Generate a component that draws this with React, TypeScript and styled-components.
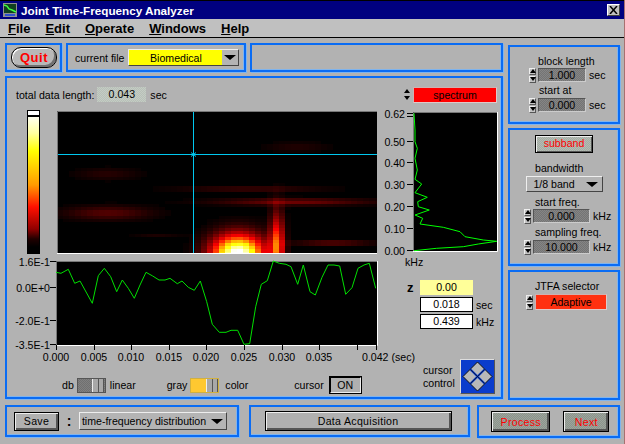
import React from 'react';
import styled, { createGlobalStyle, css } from 'styled-components';

const GlobalStyle = createGlobalStyle`
  html, body { margin: 0; padding: 0; background: #b2b2b2; }
  body { font-family: "Liberation Sans", Arial, sans-serif; font-size: 10.6px; color: #000; }
`;

const dither = (a: string, b: string) => css`
  background-color: ${a};
  background-image: repeating-conic-gradient(${a} 0 25%, ${b} 0 50%);
  background-size: 2px 2px;
`;

const Win = styled.div`
  width: 625px;
  height: 444px;
  overflow: hidden;
  background: #b2b2b2;
  box-sizing: border-box;
  border-right: 1px solid #a87070;
`;

const TitleBar = styled.div`
  height: 19px;
  box-sizing: border-box;
  border-top: 1px solid #000;
  background: #000080;
  color: #fff;
  display: flex;
  align-items: center;
  padding: 0 4px 0 3px;
  font-weight: bold;
  font-size: 11.7px;
  gap: 4px;
`;

const CloseBtn = styled.div`
  margin-left: auto;
  width: 13px;
  height: 12px;
  background: #c0c0c0;
  border: 1px solid;
  border-color: #fff #404040 #404040 #fff;
  box-sizing: border-box;
  display: flex;
  align-items: center;
  justify-content: center;
`;

const MenuBar = styled.div`
  height: 19px;
  box-sizing: border-box;
  background: #c0c0c0;
  border-bottom: 1px solid #000;
  display: flex;
  align-items: center;
  padding: 0 0 0 8px;
  font-weight: bold;
  font-size: 13px;
  gap: 15px;
  u { text-decoration: underline; }
`;

const Content = styled.div`
  padding: 5px 4px 0 5px;
`;

const UpperArea = styled.div`
  display: flex;
  gap: 5px;
`;

const LeftCol = styled.div`
  width: 498px;
  display: flex;
  flex-direction: column;
  gap: 4px;
`;

const RightCol = styled.div`
  width: 112px;
  padding-top: 2px;
  display: flex;
  flex-direction: column;
  gap: 4px;
`;

const Panel = styled.div<{ $w?: number; $h: number }>`
  ${(p) => (p.$w ? `width: ${p.$w}px;` : 'flex: 1;')}
  height: ${(p) => p.$h}px;
  box-sizing: border-box;
  border: 2px solid #0a6cf4;
  box-shadow: 1px 1px 0 #7fb4ee, inset -1px -1px 0 #7fb4ee;
`;

const TopStrip = styled.div`
  display: flex;
  gap: 4px;
`;

const CenterPanel = styled(Panel)<{ $pl: number }>`
  display: flex;
  align-items: center;
  padding-left: ${(p) => p.$pl}px;
`;

const QuitButton = styled.div`
  width: 46px;
  height: 21px;
  box-sizing: border-box;
  border: 1px solid #000;
  border-radius: 10px;
  box-shadow: inset 1px 1px 0 #fff, inset -2px -2px 0 #707070;
  background: #b8b8b8;
  color: #ff0000;
  font-weight: bold;
  font-size: 13px;
  letter-spacing: 0.5px;
  display: flex;
  align-items: center;
  justify-content: center;
`;

const Label = styled.span<{ $ml?: number }>`
  margin-left: ${(p) => p.$ml ?? 0}px;
  white-space: nowrap;
`;

const Ring = styled.div<{ $w: number; $h: number; $bg?: string; $ml?: number; $mt?: number }>`
  width: ${(p) => p.$w}px;
  height: ${(p) => p.$h}px;
  margin-left: ${(p) => p.$ml ?? 0}px;
  margin-top: ${(p) => p.$mt ?? 0}px;
  box-sizing: border-box;
  background: ${(p) => p.$bg ?? '#b4b4b4'};
  border: 1px solid;
  border-color: #eee #444 #444 #eee;
  display: flex;
  align-items: center;
  flex: none;
`;

const RingText = styled.div`
  flex: 1;
  text-align: center;
  white-space: nowrap;
`;

const ArrowBox = styled.div<{ $w: number }>`
  width: ${(p) => p.$w}px;
  align-self: stretch;
  background: #b4b4b4;
  display: flex;
  align-items: center;
  justify-content: center;
  flex: none;
`;

const DownArrow = styled.div<{ $s: number }>`
  width: 0;
  height: 0;
  border-left: ${(p) => p.$s}px solid transparent;
  border-right: ${(p) => p.$s}px solid transparent;
  border-top: ${(p) => p.$s - 1}px solid #000;
`;

const MainPanel = styled(Panel)`
  display: flex;
  flex-direction: column;
`;

const InfoRow = styled.div`
  display: flex;
  align-items: center;
  height: 19px;
  margin: 7px 4px 0 9px;
`;

const LengthValue = styled.div`
  width: 49px;
  height: 15px;
  margin: 0 4px 0 3px;
  ${dither('#b8c0b8', '#c4ccc4')}
  text-align: center;
  line-height: 15px;
`;

const RedValue = styled.div<{ $w: number; $ml: number; $bg: string }>`
  width: ${(p) => p.$w}px;
  height: 16px;
  margin-left: ${(p) => p.$ml}px;
  background: ${(p) => p.$bg};
  border: 1px solid;
  border-color: #d0b0b0 #e0c8c8 #e0c8c8 #d0b0b0;
  box-sizing: border-box;
  text-align: center;
  line-height: 15px;
`;

const TopSpinner = styled.div`
  display: flex;
  flex-direction: column;
  gap: 3px;
  align-items: center;
  width: 8px;
  margin-left: auto;
`;

const Body = styled.div`
  display: flex;
  margin-top: 4px;
`;

const PlotCol = styled.div`
  width: 372px;
  flex: none;
`;

const HeatRow = styled.div`
  display: flex;
  height: 147px;
  padding-left: 20px;
`;

const ColorBar = styled.div`
  width: 13px;
  height: 144px;
  margin: 2px 17px 0 0;
  box-sizing: border-box;
  border: 1px solid #000;
  flex: none;
  background: linear-gradient(
    to bottom,
    #fff 0,
    #fff 4px,
    #000 4px,
    #000 6px,
    #fffff0 6px,
    #ffffa0 22px,
    #ffff00 40px,
    #ff9a00 74px,
    #ff1000 96px,
    #900000 118px,
    #200000 128px,
    #000 136px
  );
`;

const Chart = styled.svg`
  display: block;
  overflow: visible;
  font-family: "Liberation Sans", Arial, sans-serif;
  font-size: 10.6px;
  flex: none;
`;

const HeatChart = styled(Chart)`
  overflow: hidden;
  margin-top: 3px;
`;

const SwitchRow = styled.div`
  display: flex;
  align-items: center;
  height: 18px;
  margin-top: 11px;
  padding-left: 55px;
`;

const SwitchTrack = styled.div<{ $on?: boolean }>`
  width: 29px;
  height: 15px;
  margin: 0 4px 0 3px;
  box-sizing: border-box;
  display: flex;
  justify-content: ${(p) => (p.$on ? 'flex-end' : 'flex-start')};
  border: 1px solid ${(p) => (p.$on ? '#d0b040' : '#555')};
  ${(p) => (p.$on ? 'background: #ffc830;' : dither('#707070', '#808080'))}
`;

const SwitchKnob = styled.div<{ $left: number }>`
  width: 12px;
  margin-left: ${(p) => p.$left}px;
  background: #a8a8a8;
  border-left: 1px solid #eee;
  border-right: 1px solid #555;
  box-sizing: border-box;
  &::after {
    content: '';
    display: block;
    width: 1px;
    height: 100%;
    margin-left: 5px;
    background: #555;
  }
`;

const OnButton = styled.div`
  width: 33px;
  height: 18px;
  margin-left: 5px;
  box-sizing: border-box;
  border: 2px solid;
  border-color: #000 #eee #eee #000;
  outline: 1px solid #000;
  outline-offset: -1px;
  background: #b0b0b0;
  text-align: center;
  line-height: 15px;
`;

const ReadCol = styled.div`
  width: 118px;
  flex: none;
  display: flex;
  flex-direction: column;
`;

const Readouts = styled.div`
  margin-top: 12px;
  padding-left: 28px;
  display: flex;
  flex-direction: column;
  gap: 2px;
`;

const ReadRow = styled.div`
  display: flex;
  align-items: center;
`;

const ZLabel = styled.b`
  width: 13px;
  font-size: 13px;
  flex: none;
`;

const ReadBox = styled.div<{ $pale?: boolean }>`
  width: 53px;
  height: 15px;
  box-sizing: border-box;
  background: ${(p) => (p.$pale ? '#ffff99' : '#fff')};
  border: 1px solid ${(p) => (p.$pale ? '#ffff99' : '#000')};
  text-align: center;
  line-height: 13px;
  margin-right: 3px;
`;

const CursorBlock = styled.div`
  display: flex;
  align-items: center;
  margin-top: 30px;
  padding-left: 44px;
  line-height: 13px;
  gap: 5px;
`;

const CursorPad = styled.div`
  width: 35px;
  height: 35px;
  box-sizing: border-box;
  background: #0a3ccc;
  border: 1px solid;
  border-color: #ddd #555 #555 #ddd;
  flex: none;
`;

const CenterStack = styled(Panel)`
  display: flex;
  flex-direction: column;
  align-items: center;
`;

const ControlLine = styled.div<{ $mt?: number; $pl?: number }>`
  display: flex;
  align-items: center;
  margin-top: ${(p) => p.$mt ?? 0}px;
  padding-left: ${(p) => p.$pl ?? 0}px;
  align-self: stretch;
  height: 14px;
  white-space: nowrap;
`;

const SpinnerWrap = styled.div`
  width: 7px;
  margin-right: 2px;
  display: flex;
  flex-direction: column;
  gap: 1px;
  flex: none;
`;

const SpinCell = styled.div`
  height: 7px;
  background: #c4c4c4;
  border: 1px solid;
  border-color: #eee #555 #555 #eee;
  box-sizing: border-box;
  display: flex;
  align-items: center;
  justify-content: center;
`;

const Tri = styled.div<{ $up?: boolean }>`
  width: 0;
  height: 0;
  border-left: 3px solid transparent;
  border-right: 3px solid transparent;
  ${(p) => (p.$up ? 'border-bottom: 4px solid #000;' : 'border-top: 4px solid #000;')}
`;

const Dark = styled.div<{ $w: number }>`
  width: ${(p) => p.$w}px;
  height: 14px;
  box-sizing: border-box;
  ${dither('#747474', '#858585')}
  border: 1px solid;
  border-color: #555 #ccc #ccc #555;
  text-align: center;
  line-height: 13px;
  margin-right: 3px;
  flex: none;
`;

const SubbandButton = styled.div`
  width: 58px;
  height: 18px;
  margin-top: 5px;
  box-sizing: border-box;
  border: 1px solid #000;
  box-shadow: inset 1px 1px 0 #eee, inset -1px -1px 0 #555;
  ${dither('#a4aca4', '#b4bcb4')}
  color: #ff0000;
  text-align: center;
  line-height: 15px;
`;

const FlatButton = styled.div<{ $w: number; $h: number; $red?: boolean; $ml?: number }>`
  width: ${(p) => p.$w}px;
  height: ${(p) => p.$h}px;
  margin-left: ${(p) => p.$ml ?? 0}px;
  box-sizing: border-box;
  border: 1px solid #000;
  box-shadow: inset 1px 1px 0 #eee, inset -2px -2px 0 #555;
  background: #b0b0b0;
  ${(p) => (p.$red ? dither('#8c948c', '#9ca49c') : '')}
  color: ${(p) => (p.$red ? '#ff0000' : '#000')};
  display: flex;
  align-items: center;
  justify-content: center;
  white-space: nowrap;
  letter-spacing: 0.3px;
  flex: none;
`;

const BottomArea = styled.div`
  display: flex;
  margin-top: 5px;
`;

const BottomPanel = styled(Panel)<{ $ml?: number }>`
  margin-left: ${(p) => p.$ml ?? 0}px;
  display: flex;
  align-items: center;
`;

const Colon = styled.b`
  width: 20px;
  text-align: center;
  font-size: 14px;
  flex: none;
`;

const clamp = (v: number) => Math.max(0, Math.min(1, v));

const heatColor = (v: number) => {
  const t = clamp(v);
  const r = Math.round(255 * clamp(t / 0.4));
  const g = Math.round(255 * clamp((t - 0.4) / 0.35));
  const b = Math.round(255 * clamp((t - 0.78) / 0.22));
  return `rgb(${r},${g},${b})`;
};

// blobs in reference px: cx, cy, rx, ry, level
const blobs = [
  [238, 254, 30, 22, 1.05],
  [277, 245, 8, 36, 0.5],
  [294, 202, 90, 4, 0.17],
  [250, 189, 85, 3.5, 0.09],
  [108, 213, 50, 8, 0.13],
  [107, 174, 38, 7, 0.06],
  [297, 147, 38, 6, 0.05],
  [333, 243, 45, 3, 0.15],
  [157, 236, 28, 1.5, 0.05],
];

const HeatCells = () => {
  const cells: React.ReactElement[] = [];
  for (let y = 111; y < 253; y += 3) {
    for (let x = 57; x < 377; x += 6) {
      let v = 0;
      blobs.forEach(([cx, cy, rx, ry, lvl]) => {
        const d = ((x + 3 - cx) / rx) ** 2 + ((y + 1.5 - cy) / ry) ** 2;
        v += lvl * Math.exp(-d * 1.4);
      });
      if (v > 0.012) {
        cells.push(<rect key={`${x}-${y}`} x={x} y={y} width={6} height={3} fill={heatColor(v)} />);
      }
    }
  }
  return <>{cells}</>;
};

const timeRaw = [
  [168, 52], [183, 55], [205, 43], [224, 85], [240, 78], [277, 145], [295, 62], [313, 40], [332, 65], [350, 110],
  [367, 75], [385, 100], [403, 130], [420, 90], [438, 52], [458, 63], [477, 75], [495, 75], [510, 70], [532, 86],
  [546, 78], [565, 97], [583, 106], [601, 78], [620, 140], [637, 208], [658, 232], [678, 232], [693, 226], [713, 226],
  [732, 268], [749, 266], [767, 155], [784, 88], [802, 77], [820, 18], [838, 25], [858, 28], [873, 35], [893, 88],
  [910, 30], [930, 110], [946, 120], [966, 67], [984, 30], [1002, 30], [1019, 33], [1037, 118], [1056, 98], [1074, 40],
  [1092, 30], [1108, 25], [1127, 100],
];
const timeLine = timeRaw.map(([x, y]) => `${(x / 3).toFixed(1)},${(y / 3 + 255).toFixed(1)}`).join(' ');

const specRaw = [
  [132, 40], [135, 90], [135, 125], [142, 145], [135, 175], [142, 210], [135, 238], [155, 252], [135, 278], [172, 292],
  [143, 305], [145, 320], [178, 330], [135, 345], [158, 355], [150, 372], [220, 382], [270, 395], [285, 410], [340, 420],
  [380, 424], [325, 432], [280, 440], [200, 445], [132, 452],
];
const specLine = specRaw.map(([x, y]) => `${(x / 3 + 370).toFixed(1)},${(y / 3 + 100).toFixed(1)}`).join(' ');

const freqTicks: [string, number][] = [
  ['0.62', 113], ['0.50', 141], ['0.40', 162], ['0.30', 184], ['0.20', 206], ['0.10', 228], ['0.00', 250],
];
const ampTicks: [string, number][] = [
  ['1.6E-1', 261], ['0.0E+0', 287], ['-2.0E-1', 320], ['-3.5E-1', 344],
];
const timeTicks: [string, number][] = [
  ['0.000', 56], ['0.005', 94], ['0.010', 131], ['0.015', 169], ['0.020', 206], ['0.025', 244], ['0.030', 282], ['0.035', 319],
];

const HeatMap = () => (
  <HeatChart width={320} height={143} viewBox="57 111 320 143">
    <rect x={57} y={111} width={320} height={142} fill="#000" />
    <HeatCells />
    <line x1={57} x2={377} y1={154.5} y2={154.5} stroke="#00c8f0" />
    <line x1={193.5} x2={193.5} y1={111} y2={253} stroke="#00c8f0" />
    <path d="M191 152.5l5 4M196 152.5l-5 4" stroke="#00c8f0" />
    <path d="M57.5 253V111.5H377" fill="none" stroke="#777" />
    <path d="M57 253.5H377" stroke="#fff" />
  </HeatChart>
);

const Spectrum = () => (
  <Chart width={118} height={160} viewBox="379 108 118 160">
    <rect x={413} y={112} width={84} height={139} fill="#000" />
    <path d="M413.5 251V112.5H497" fill="none" stroke="#777" />
    <path d="M413 251.5H497.5V112" fill="none" stroke="#fff" />
    <polyline points={specLine} fill="none" stroke="#00ff00" />
    {freqTicks.map(([t, y]) => (
      <g key={t}>
        <text x={405} y={y + 4.5} textAnchor="end">{t}</text>
        <line x1={407} x2={413} y1={y + 0.5} y2={y + 0.5} stroke="#000" />
      </g>
    ))}
    <line x1={407} x2={413} y1={116.5} y2={116.5} stroke="#000" />
    <text x={405} y={266}>kHz</text>
  </Chart>
);

const TimePlot = () => (
  <Chart width={372} height={110} viewBox="7 255 372 110">
    <rect x={56} y={261} width={321} height={84} fill="#000" />
    <path d="M56.5 345V261.5H377" fill="none" stroke="#777" />
    <path d="M56 345.5H377.5V261" fill="none" stroke="#fff" />
    <polyline points={timeLine} fill="none" stroke="#00e000" />
    {ampTicks.map(([t, y]) => (
      <g key={t}>
        <text x={50} y={y + 4.5} textAnchor="end">{t}</text>
        <line x1={50} x2={56} y1={y + 0.5} y2={y + 0.5} stroke="#000" />
      </g>
    ))}
    {timeTicks.map(([t, x]) => (
      <g key={t}>
        <text x={x} y={361} textAnchor="middle">{t}</text>
        <line x1={x + 0.5} x2={x + 0.5} y1={345} y2={350} stroke="#000" />
      </g>
    ))}
    <line x1={357.5} x2={357.5} y1={345} y2={350} stroke="#000" />
    <line x1={376.5} x2={376.5} y1={345} y2={350} stroke="#000" />
    <text x={362} y={361}>0.042 (sec)</text>
  </Chart>
);

const Spinner = () => (
  <SpinnerWrap>
    <SpinCell><Tri $up /></SpinCell>
    <SpinCell><Tri /></SpinCell>
  </SpinnerWrap>
);

const Logo = () => (
  <svg width={14} height={14} viewBox="0 0 14 14">
    <rect width={14} height={14} fill="#909090" />
    <rect x={1} y={1} width={12} height={9} fill="#104020" />
    <path d="M1 2l3 1 2 3 3 1 4 2" fill="none" stroke="#40ff40" strokeWidth={1.4} />
    <rect x={2} y={11} width={10} height={2} fill="#3050d0" />
  </svg>
);

const Pad = () => (
  <svg width={33} height={33} viewBox="0 0 33 33" style={{ display: 'block' }}>
    <path d="M16.5 2L31 16.5 16.5 31 2 16.5Z" fill="#b8b8b8" stroke="#111" />
    <path d="M9.25 9.25L23.75 23.75M23.75 9.25L9.25 23.75" stroke="#0a3ccc" strokeWidth={2} />
    <path d="M9.25 9.25L23.75 23.75M23.75 9.25L9.25 23.75" stroke="#111" strokeWidth={0.7} />
  </svg>
);

export default function App() {
  return (
    <Win>
      <GlobalStyle />
      <TitleBar>
        <Logo />
        Joint Time-Frequency Analyzer
        <CloseBtn>
          <svg width={9} height={8} viewBox="0 0 9 8">
            <path d="M1 0l7 8M8 0L1 8" stroke="#000" strokeWidth={1.5} />
          </svg>
        </CloseBtn>
      </TitleBar>
      <MenuBar>
        <span><u>F</u>ile</span>
        <span><u>E</u>dit</span>
        <span><u>O</u>perate</span>
        <span><u>W</u>indows</span>
        <span><u>H</u>elp</span>
      </MenuBar>
      <Content>
        <UpperArea>
          <LeftCol>
            <TopStrip>
              <CenterPanel $w={57} $h={29} $pl={4}>
                <QuitButton>Quit</QuitButton>
              </CenterPanel>
              <CenterPanel $w={180} $h={29} $pl={7}>
                <Label>current file</Label>
                <Ring $w={111} $h={17} $bg="#ffff00" $ml={4}>
                  <RingText>Biomedical</RingText>
                  <ArrowBox $w={16}><DownArrow $s={6} /></ArrowBox>
                </Ring>
              </CenterPanel>
              <Panel $h={29} />
            </TopStrip>
            <MainPanel $w={498} $h={323}>
              <InfoRow>
                <Label>total data length:</Label>
                <LengthValue>0.043</LengthValue>
                <Label>sec</Label>
                <TopSpinner>
                  <Tri $up />
                  <Tri />
                </TopSpinner>
                <RedValue $w={84} $ml={2} $bg="#ff0000">spectrum</RedValue>
              </InfoRow>
              <Body>
                <PlotCol>
                  <HeatRow>
                    <ColorBar />
                    <HeatMap />
                  </HeatRow>
                  <TimePlot />
                  <SwitchRow>
                    <Label>db</Label>
                    <SwitchTrack>
                      <SwitchKnob $left={14} />
                    </SwitchTrack>
                    <Label>linear</Label>
                    <Label $ml={31}>gray</Label>
                    <SwitchTrack $on>
                      <SwitchKnob $left={0} />
                    </SwitchTrack>
                    <Label $ml={2}>color</Label>
                    <Label $ml={46}>cursor</Label>
                    <OnButton>ON</OnButton>
                  </SwitchRow>
                </PlotCol>
                <ReadCol>
                  <Spectrum />
                  <Readouts>
                    <ReadRow>
                      <ZLabel>z</ZLabel>
                      <ReadBox $pale>0.00</ReadBox>
                    </ReadRow>
                    <ReadRow>
                      <ZLabel />
                      <ReadBox>0.018</ReadBox>
                      <Label>sec</Label>
                    </ReadRow>
                    <ReadRow>
                      <ZLabel />
                      <ReadBox>0.439</ReadBox>
                      <Label>kHz</Label>
                    </ReadRow>
                  </Readouts>
                  <CursorBlock>
                    <span>cursor<br />control</span>
                    <CursorPad><Pad /></CursorPad>
                  </CursorBlock>
                </ReadCol>
              </Body>
            </MainPanel>
          </LeftCol>
          <RightCol>
            <CenterStack $w={112} $h={79}>
              <ControlLine $mt={7} $pl={28}>block length</ControlLine>
              <ControlLine $pl={19}>
                <Spinner />
                <Dark $w={48}>1.000</Dark>
                sec
              </ControlLine>
              <ControlLine $mt={1} $pl={29}>start at</ControlLine>
              <ControlLine $mt={1} $pl={19}>
                <Spinner />
                <Dark $w={48}>0.000</Dark>
                sec
              </ControlLine>
            </CenterStack>
            <CenterStack $w={112} $h={138}>
              <SubbandButton>subband</SubbandButton>
              <ControlLine $mt={8} $pl={25}>bandwidth</ControlLine>
              <Ring $w={77} $h={16} $mt={1}>
                <RingText>1/8 band</RingText>
                <ArrowBox $w={20}><DownArrow $s={6} /></ArrowBox>
              </Ring>
              <ControlLine $mt={3} $pl={25}>start freq.</ControlLine>
              <ControlLine $pl={14}>
                <Spinner />
                <Dark $w={57}>0.000</Dark>
                kHz
              </ControlLine>
              <ControlLine $mt={2} $pl={25}>sampling freq.</ControlLine>
              <ControlLine $mt={1} $pl={14}>
                <Spinner />
                <Dark $w={57}>10.000</Dark>
                kHz
              </ControlLine>
            </CenterStack>
            <CenterStack $w={112} $h={130}>
              <ControlLine $mt={7} $pl={25}>JTFA selector</ControlLine>
              <ControlLine $mt={2} $pl={16}>
                <Spinner />
                <RedValue $w={72} $ml={0} $bg="#ff3010">Adaptive</RedValue>
              </ControlLine>
            </CenterStack>
          </RightCol>
        </UpperArea>
        <BottomArea>
          <BottomPanel $w={234} $h={32}>
            <FlatButton $w={45} $h={19} $ml={7}>Save</FlatButton>
            <Colon>:</Colon>
            <Ring $w={148} $h={18}>
              <RingText>time-frequency distribution</RingText>
              <ArrowBox $w={18}><DownArrow $s={6} /></ArrowBox>
            </Ring>
          </BottomPanel>
          <BottomPanel $w={222} $h={32} $ml={10}>
            <FlatButton $w={187} $h={20} $ml={14}>Data Acquisition</FlatButton>
          </BottomPanel>
          <BottomPanel $w={143} $h={33} $ml={7}>
            <FlatButton $w={59} $h={21} $red $ml={12}>Process</FlatButton>
            <FlatButton $w={46} $h={21} $red $ml={13}>Next</FlatButton>
          </BottomPanel>
        </BottomArea>
      </Content>
    </Win>
  );
}
